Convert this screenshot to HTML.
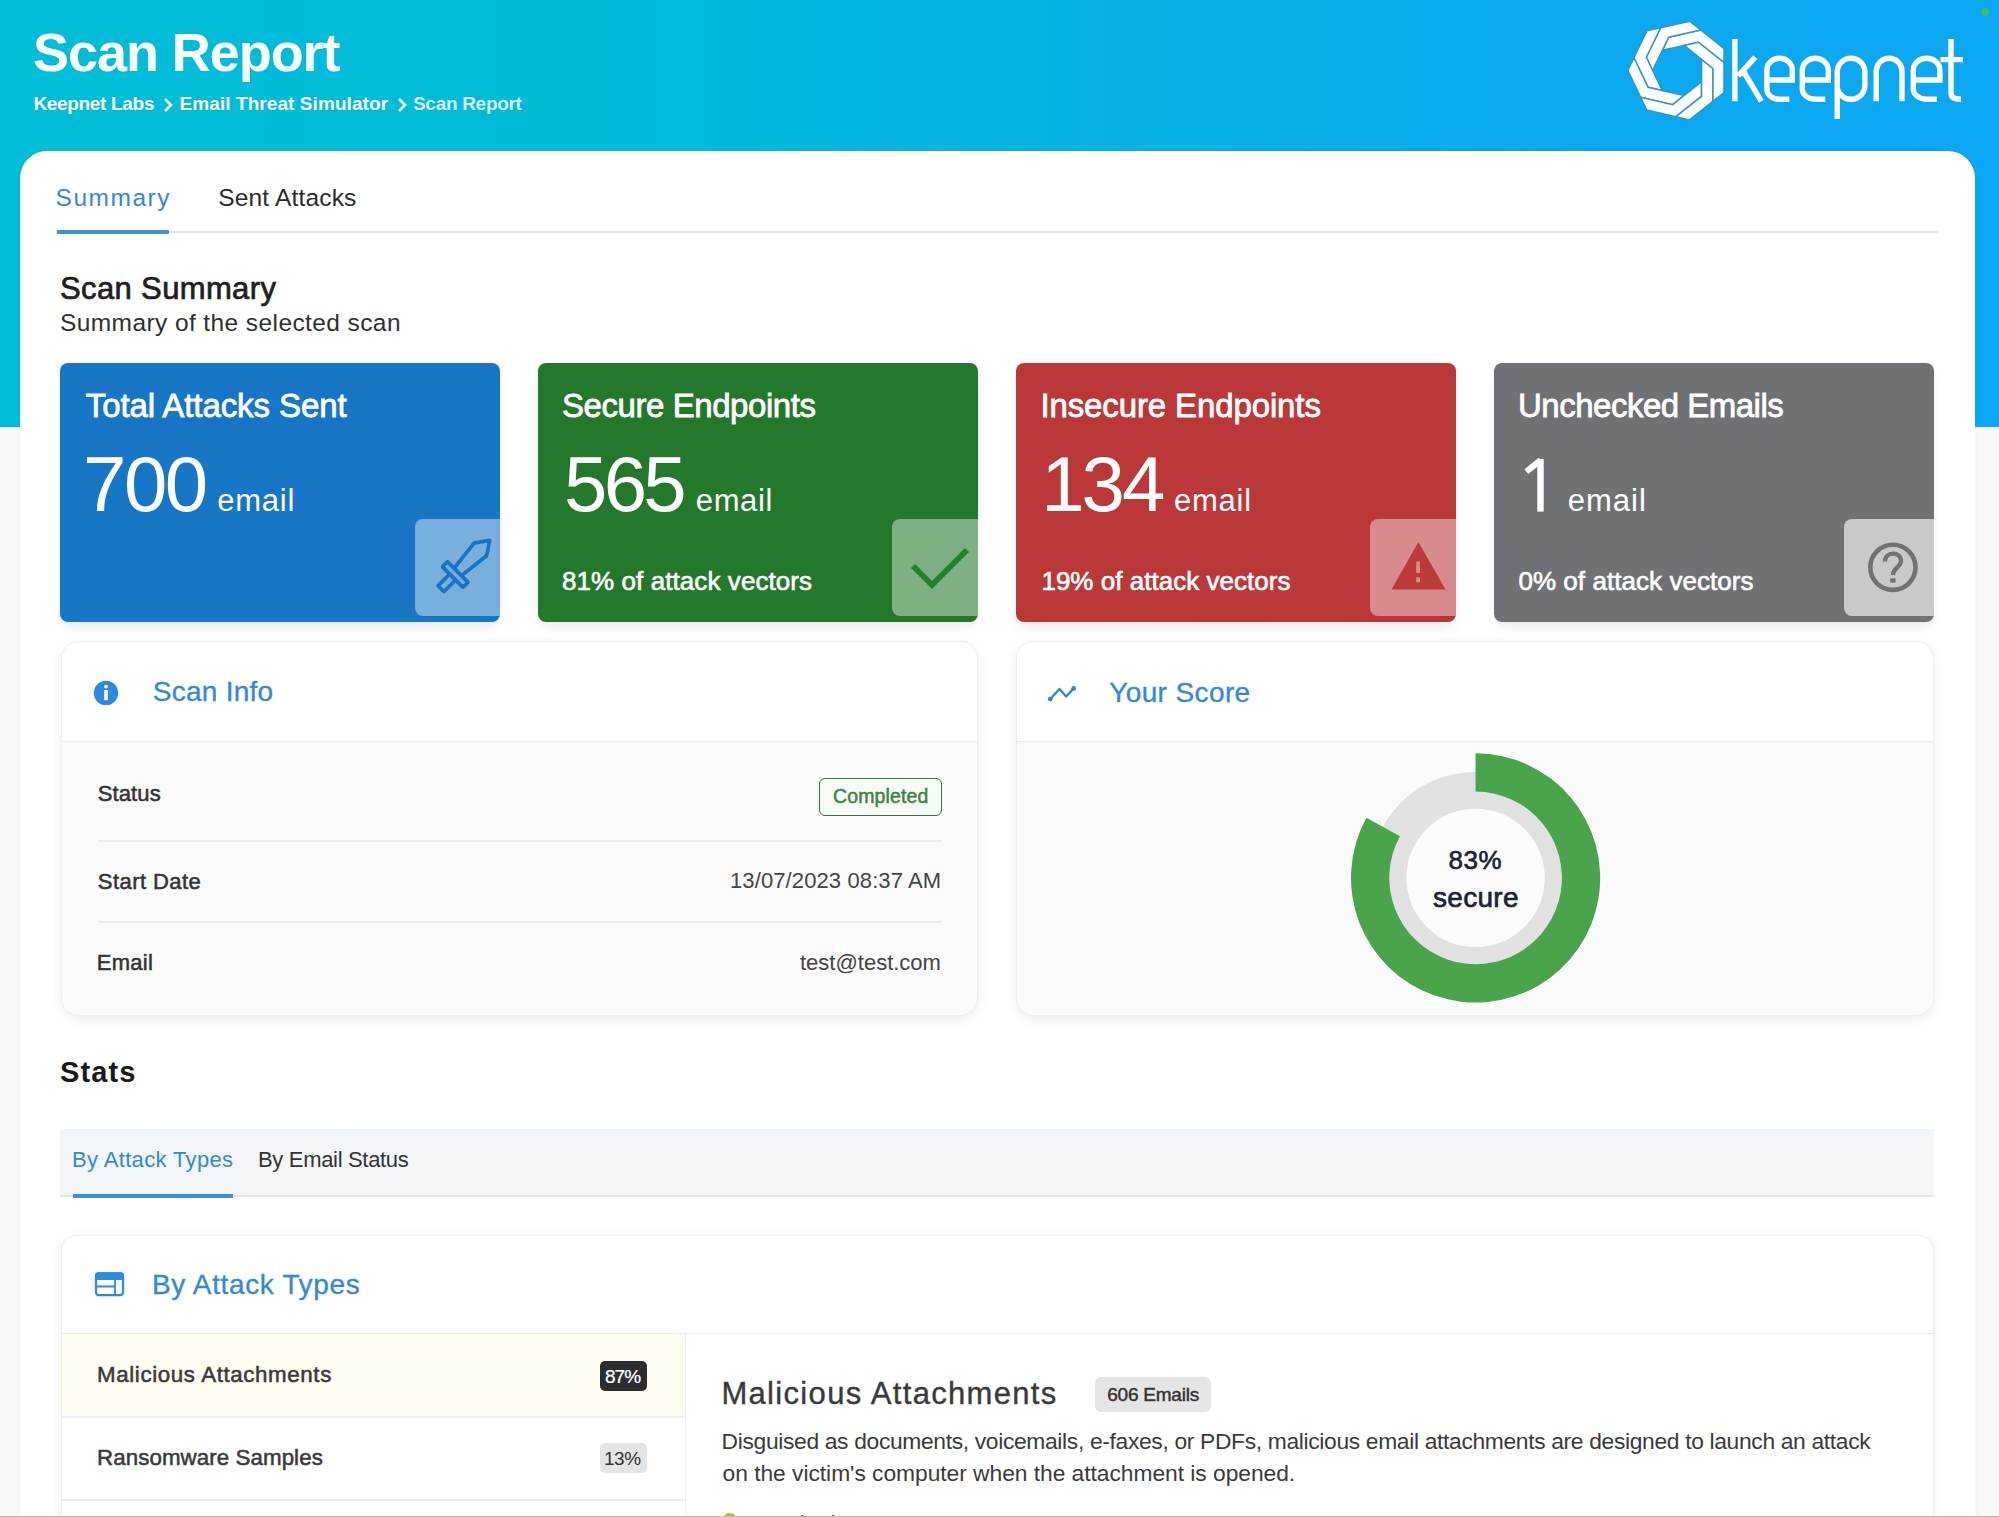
<!DOCTYPE html>
<html><head><meta charset="utf-8"><style>
html,body{margin:0;padding:0;}
body{width:1999px;height:1517px;position:relative;overflow:hidden;background:#f8f8f9;font-family:"Liberation Sans",sans-serif;}
.a{position:absolute;}
.t{position:absolute;white-space:nowrap;line-height:1;}
svg{position:absolute;left:0;top:0;}
</style></head><body>
<div class="a" style="left:0;top:0;width:1999px;height:427px;background:linear-gradient(90deg,#00bdd7 0%,#02bad9 35%,#0aa9ef 80%,#0ca7f2 100%)"></div>
<div class="a" style="left:20px;top:151px;width:1955px;height:1400px;background:#fff;border-radius:27px 27px 0 0;box-shadow:0 0 6px rgba(0,0,0,0.04)"></div>
<!-- tabs -->
<div class="a" style="left:57px;top:231px;width:1881px;height:2px;background:#e4e4e4"></div>
<div class="a" style="left:57px;top:230px;width:112px;height:3.5px;background:#3b8fd3"></div>
<!-- cards -->
<div class="a" style="left:60px;top:363px;width:440px;height:258.8px;background:#1876c6;border-radius:8px;box-shadow:0 7px 12px -3px rgba(0,0,0,0.10);overflow:hidden"><div class="a" style="left:355px;top:155.5px;width:85px;height:97px;background:rgba(255,255,255,0.42);border-radius:8px 0 0 8px"></div></div>
<div class="a" style="left:538px;top:363px;width:440px;height:258.8px;background:#23782b;border-radius:8px;box-shadow:0 7px 12px -3px rgba(0,0,0,0.10);overflow:hidden"><div class="a" style="left:354px;top:155.5px;width:86px;height:97px;background:rgba(255,255,255,0.42);border-radius:8px 0 0 8px"></div></div>
<div class="a" style="left:1016px;top:363px;width:440px;height:258.8px;background:#bb3839;border-radius:8px;box-shadow:0 7px 12px -3px rgba(0,0,0,0.10);overflow:hidden"><div class="a" style="left:354px;top:155.5px;width:86px;height:97px;background:rgba(255,255,255,0.42);border-radius:8px 0 0 8px"></div></div>
<div class="a" style="left:1494px;top:363px;width:440px;height:258.8px;background:#707175;border-radius:8px;box-shadow:0 7px 12px -3px rgba(0,0,0,0.10);overflow:hidden"><div class="a" style="left:350px;top:155.5px;width:90px;height:97px;background:#c9c9cb;border-radius:8px 0 0 8px"></div></div>
<!-- panels -->
<div class="a" style="left:60.5px;top:641px;width:917.5px;height:374.5px;background:#fafafa;border-radius:18px;box-shadow:0 3px 12px rgba(0,0,0,0.08);border:1px solid #eeeeee;box-sizing:border-box;overflow:hidden"><div class="a" style="left:0;top:0;width:100%;height:99px;background:#fff;border-bottom:1px solid #ebebeb"></div></div>
<div class="a" style="left:97.5px;top:840px;width:844px;height:1.5px;background:#eaeaea"></div>
<div class="a" style="left:97.5px;top:921px;width:844px;height:1.5px;background:#eaeaea"></div>
<div class="a" style="left:819px;top:778px;width:122.6px;height:37.6px;border:1.3px solid #3b713e;border-radius:6px;background:#f7fbf6;box-sizing:border-box"></div>
<div class="a" style="left:1016px;top:641px;width:918px;height:374.5px;background:#fafafa;border-radius:18px;box-shadow:0 3px 12px rgba(0,0,0,0.08);border:1px solid #eeeeee;box-sizing:border-box;overflow:hidden"><div class="a" style="left:0;top:0;width:100%;height:99px;background:#fff;border-bottom:1px solid #ebebeb"></div></div>
<!-- stats -->
<div class="a" style="left:60px;top:1128.5px;width:1874px;height:66px;background:#f3f6f9;border-bottom:2.5px solid #e3e6ea"></div>
<div class="a" style="left:73px;top:1194px;width:160px;height:3.5px;background:#3b8fd3"></div>
<div class="a" style="left:60.5px;top:1235px;width:1873px;height:400px;background:#fff;border-radius:15px;box-shadow:0 3px 12px rgba(0,0,0,0.07);border:1px solid #ededed;box-sizing:border-box;overflow:hidden">
  <div class="a" style="left:0;top:97px;width:100%;height:1px;background:#ececec"></div>
  <div class="a" style="left:0;top:98px;width:623px;height:82px;background:#fffcf1"></div>
  <div class="a" style="left:0;top:180px;width:623px;height:1.5px;background:#efefef"></div>
  <div class="a" style="left:0;top:263px;width:623px;height:1.5px;background:#efefef"></div>
  <div class="a" style="left:623px;top:98px;width:1.5px;height:400px;background:#efefef"></div>
</div>
<div class="a" style="left:599.5px;top:1361px;width:47.5px;height:30px;background:#2b2d31;border-radius:5px"></div>
<div class="a" style="left:599.5px;top:1443.3px;width:47.5px;height:30px;background:#e4e4e4;border-radius:5px"></div>
<div class="a" style="left:1094.8px;top:1376.5px;width:116.4px;height:35.2px;background:#e5e5e5;border-radius:6px"></div>
<svg width="1999" height="1517" viewBox="0 0 1999 1517">
<g fill="#fff" stroke="#2f97c2" stroke-width="1.5" stroke-linejoin="miter"><polygon points="1724.05,48.64 1700.75,29.98 1668.75,37.21 1662.39,50.33 1698.41,42.20 1724.02,62.71"/><polygon points="1689.77,21.18 1660.66,27.76 1646.35,57.29 1652.65,70.44 1668.75,37.21 1700.75,29.98"/><polygon points="1646.93,30.86 1633.92,57.72 1648.09,87.32 1662.30,90.60 1646.35,57.29 1660.66,27.76"/><polygon points="1627.79,70.39 1640.68,97.31 1672.65,104.68 1684.07,95.62 1648.09,87.32 1633.92,57.72"/><polygon points="1646.76,110.00 1675.84,116.71 1701.54,96.31 1701.57,81.72 1672.65,104.68 1640.68,97.31"/><polygon points="1689.55,119.87 1712.93,101.31 1713.00,68.50 1701.63,59.38 1701.54,96.31 1675.84,116.71"/><polygon points="1723.95,92.56 1724.02,62.71 1698.41,42.20 1684.19,45.41 1713.00,68.50 1712.93,101.31"/></g>
<path d="M1734.9,39.0 V101.3 M1755.3,57.2 L1738.2,75.8 M1744.2,72.5 L1761.4,101.3 M1766.9,80.0 H1792.3 V69.72999999999995 A12.699999999999932,11.42999999999994 0 0 0 1766.9,69.72999999999995 V89.14000000000004 A12.699999999999932,10.159999999999947 0 0 0 1779.6,99.3 H1789.3 M1802.3,80.0 H1828.3 V70.0 A13.0,11.700000000000001 0 0 0 1802.3,70.0 V88.89999999999999 A13.0,10.4 0 0 0 1815.3,99.3 H1825.3 M1913.3,80.0 H1939.8999999999999 V70.26999999999997 A13.299999999999955,11.96999999999996 0 0 0 1913.3,70.26999999999997 V88.66000000000003 A13.299999999999955,10.639999999999965 0 0 0 1926.6,99.3 H1936.8999999999999 M1837.2,118.9 V72.14999999999992 A13.849999999999909,13.849999999999909 0 0 1 1864.8999999999999,72.14999999999992 V85.45000000000009 A13.849999999999909,13.849999999999909 0 0 1 1837.2,85.45000000000009 M1876.2,101.3 V71.19999999999999 A12.899999999999977,12.899999999999977 0 0 1 1902.0,71.19999999999999 V101.3 M1951.0,39.0 V93 Q1951.0,99.3 1961,99.3 M1940.5,59.6 H1962.8" fill="none" stroke="#fff" stroke-width="5.4"/>
<path d="M165,99 L171,105 L165,111 M399,99 L405,105 L399,111" fill="none" stroke="#fff" stroke-width="2.6"/>
<g transform="translate(455.2,574.5) rotate(45)" fill="none" stroke="#1a72c0" stroke-width="3.7" stroke-linejoin="round"><path d="M-5.2,-3.6 L-8.8,-35.5 L0.3,-48.5 L8.9,-35.5 L5.2,-3.6"/><rect x="-14.6" y="-3.6" width="29.2" height="7.2" rx="1"/><rect x="-4.2" y="3.6" width="8.4" height="16.6" rx="1"/></g>
<rect x="1537.3" y="458.9" width="6.4" height="52.7" fill="#fff"/><path d="M1526.3,471.7 L1540.8,460.1" stroke="#fff" stroke-width="6.2"/>
<path d="M913,566 L932,585 L967,550" fill="none" stroke="#22802b" stroke-width="5.8"/>
<path d="M1418.4,542 L1445.5,589.5 L1391.5,589.5 Z" fill="#bd3a3b"/>
<rect x="1416.2" y="561.5" width="3.8" height="11.5" fill="#d98a8a"/><rect x="1416.2" y="577.3" width="3.8" height="5" fill="#d98a8a"/>
<circle cx="1892.9" cy="567.3" r="22.6" fill="none" stroke="#707175" stroke-width="4.6"/>
<path d="M1885,561.5 C1885,551 1901,551 1901,561 C1901,567 1893,568 1893,575" fill="none" stroke="#707175" stroke-width="4.2"/>
<rect x="1890.2" y="578.3" width="5.3" height="4.4" fill="#707175"/>
<circle cx="106" cy="693" r="12.2" fill="#2b8ae0"/><circle cx="106" cy="686.6" r="1.9" fill="#fff"/><rect x="104.2" y="690" width="3.6" height="10.2" fill="#fff"/>
<path d="M1050.3,699.1 L1059.5,688.9 L1066.1,696.5 L1073.7,688.4" fill="none" stroke="#2f86d0" stroke-width="2.3" stroke-linejoin="round"/><circle cx="1050.3" cy="699.1" r="2.4" fill="#2f86d0"/><circle cx="1073.7" cy="688.4" r="2.4" fill="#2f86d0"/>
<rect x="96" y="1273.4" width="27" height="21.8" rx="3" fill="none" stroke="#2b8ae0" stroke-width="2.3"/><path d="M95,1275.5 Q95,1272.3 98.2,1272.3 H120.9 Q124.1,1272.3 124.1,1275.5 V1280 H95 Z" fill="#2b8ae0"/><path d="M96,1286.5 H115 M115,1279 V1295" stroke="#2b8ae0" stroke-width="1.8"/>
<circle cx="1475.6" cy="877.9" r="87.5" fill="none" stroke="#e1e1e1" stroke-width="37"/>
<circle cx="1475.6" cy="877.9" r="69" fill="#fbfbfb"/>
<path d="M1475.60,753.30 A124.6,124.6 0 1 1 1366.41,817.87 L1399.97,836.32 A86.3,86.3 0 1 0 1475.60,791.60 Z" fill="#49a44c"/>
<circle cx="1985.2" cy="12" r="4.2" fill="#35c46a"/>
<circle cx="729.5" cy="1520" r="7" fill="#e2a52c"/>
</svg>
<div class="t" id="hdr" style="left:33.00px;top:25.10px;font-size:54px;font-weight:700;color:#ffffff;letter-spacing:-1.050px">Scan Report</div>
<div class="t" id="bc1" style="left:33.40px;top:94.35px;font-size:19px;font-weight:700;color:#ffffff;letter-spacing:-0.318px">Keepnet Labs</div>
<div class="t" id="bc2" style="left:179.60px;top:94.35px;font-size:19px;font-weight:700;color:#ffffff;letter-spacing:0.071px">Email Threat Simulator</div>
<div class="t" id="bc3" style="left:413.00px;top:94.35px;font-size:19px;font-weight:700;color:rgba(255,255,255,0.85);letter-spacing:-0.300px">Scan Report</div>
<div class="t" id="tab1" style="left:55.60px;top:186.18px;font-size:24.5px;font-weight:400;color:#3589cf;letter-spacing:1.500px">Summary</div>
<div class="t" id="tab2" style="left:218.20px;top:186.18px;font-size:24.5px;font-weight:400;color:#2b2b2b;letter-spacing:0.182px">Sent Attacks</div>
<div class="t" id="ss" style="left:60.00px;top:272.55px;font-size:31px;font-weight:400;color:#1f1f1f;letter-spacing:0.364px;-webkit-text-stroke:0.74px #1f1f1f">Scan Summary</div>
<div class="t" id="ssub" style="left:60.00px;top:310.78px;font-size:24.5px;font-weight:400;color:#2f2f2f;letter-spacing:0.407px">Summary of the selected scan</div>
<div class="t" id="c1t" style="left:85.80px;top:388.65px;font-size:33px;font-weight:400;color:#ffffff;letter-spacing:-0.088px;-webkit-text-stroke:0.79px #ffffff">Total Attacks Sent</div>
<div class="t" id="c2t" style="left:562.00px;top:388.65px;font-size:33px;font-weight:400;color:#ffffff;letter-spacing:-0.433px;-webkit-text-stroke:0.79px #ffffff">Secure Endpoints</div>
<div class="t" id="c3t" style="left:1040.40px;top:388.65px;font-size:33px;font-weight:400;color:#ffffff;letter-spacing:-0.118px;-webkit-text-stroke:0.79px #ffffff">Insecure Endpoints</div>
<div class="t" id="c4t" style="left:1518.00px;top:388.65px;font-size:33px;font-weight:400;color:#ffffff;letter-spacing:-0.500px;-webkit-text-stroke:0.79px #ffffff">Unchecked Emails</div>
<div class="t" id="c1n" style="left:83.00px;top:445.30px;font-size:78px;font-weight:400;color:#ffffff;letter-spacing:-2.500px">700</div>
<div class="t" id="c2n" style="left:564.00px;top:445.30px;font-size:78px;font-weight:400;color:#ffffff;letter-spacing:-3.750px">565</div>
<div class="t" id="c3n" style="left:1041.20px;top:445.30px;font-size:78px;font-weight:400;color:#ffffff;letter-spacing:-3.000px">134</div>
<div class="t" id="c1e" style="left:217.20px;top:485.25px;font-size:31px;font-weight:400;color:#ffffff;letter-spacing:0.750px">email</div>
<div class="t" id="c2e" style="left:695.80px;top:485.25px;font-size:31px;font-weight:400;color:#ffffff;letter-spacing:0.625px">email</div>
<div class="t" id="c3e" style="left:1174.00px;top:485.25px;font-size:31px;font-weight:400;color:#ffffff;letter-spacing:0.750px">email</div>
<div class="t" id="c4e" style="left:1567.80px;top:485.25px;font-size:31px;font-weight:400;color:#ffffff;letter-spacing:1.000px">email</div>
<div class="t" id="c2p" style="left:562.00px;top:567.70px;font-size:26px;font-weight:400;color:#ffffff;letter-spacing:0.075px;-webkit-text-stroke:0.62px #ffffff">81% of attack vectors</div>
<div class="t" id="c3p" style="left:1041.40px;top:567.70px;font-size:26px;font-weight:400;color:#ffffff;letter-spacing:0.025px;-webkit-text-stroke:0.62px #ffffff">19% of attack vectors</div>
<div class="t" id="c4p" style="left:1518.40px;top:567.70px;font-size:26px;font-weight:400;color:#ffffff;letter-spacing:0.053px;-webkit-text-stroke:0.62px #ffffff">0% of attack vectors</div>
<div class="t" id="si" style="left:152.80px;top:677.50px;font-size:28px;font-weight:400;color:#3589cf;letter-spacing:0.250px;-webkit-text-stroke:0.34px #3589cf">Scan Info</div>
<div class="t" id="ys" style="left:1109.20px;top:679.10px;font-size:28px;font-weight:400;color:#3589cf;letter-spacing:0.389px;-webkit-text-stroke:0.34px #3589cf">Your Score</div>
<div class="t" id="r1" style="left:97.80px;top:782.50px;font-size:22px;font-weight:400;color:#333333;letter-spacing:0.100px;-webkit-text-stroke:0.53px #333333">Status</div>
<div class="t" id="r2" style="left:97.80px;top:870.90px;font-size:22px;font-weight:400;color:#333333;letter-spacing:0.444px;-webkit-text-stroke:0.53px #333333">Start Date</div>
<div class="t" id="r3" style="left:96.80px;top:952.10px;font-size:22px;font-weight:400;color:#333333;letter-spacing:0.250px;-webkit-text-stroke:0.53px #333333">Email</div>
<div class="t" id="comp" style="left:833.00px;top:787.02px;font-size:19.5px;font-weight:400;color:#3f7f42;letter-spacing:0.125px;-webkit-text-stroke:0.47px #3f7f42">Completed</div>
<div class="t" id="date" style="left:730.00px;top:870.30px;font-size:22px;font-weight:400;color:#444444;letter-spacing:0.111px">13/07/2023 08:37 AM</div>
<div class="t" id="mail" style="left:800.00px;top:951.70px;font-size:22px;font-weight:400;color:#444444;letter-spacing:0.000px">test@test.com</div>
<div class="t" id="p83" style="left:1448.60px;top:846.90px;font-size:26px;font-weight:400;color:#1b2236;letter-spacing:0.500px;-webkit-text-stroke:0.62px #1b2236">83%</div>
<div class="t" id="sec" style="left:1433.00px;top:883.50px;font-size:28px;font-weight:400;color:#1b2236;letter-spacing:0.300px;-webkit-text-stroke:0.67px #1b2236">secure</div>
<div class="t" id="stats" style="left:60.00px;top:1057.65px;font-size:29px;font-weight:700;color:#1a1a1a;letter-spacing:1.125px">Stats</div>
<div class="t" id="st1" style="left:72.00px;top:1149.30px;font-size:22px;font-weight:400;color:#3589cf;letter-spacing:0.357px">By Attack Types</div>
<div class="t" id="st2" style="left:258.00px;top:1149.30px;font-size:22px;font-weight:400;color:#333333;letter-spacing:-0.321px">By Email Status</div>
<div class="t" id="bat" style="left:152.00px;top:1271.00px;font-size:28px;font-weight:400;color:#3589cf;letter-spacing:0.643px;-webkit-text-stroke:0.34px #3589cf">By Attack Types</div>
<div class="t" id="row1" style="left:97.00px;top:1364.45px;font-size:22.3px;font-weight:400;color:#3a3a3a;letter-spacing:0.625px;-webkit-text-stroke:0.54px #3a3a3a">Malicious Attachments</div>
<div class="t" id="b87" style="left:605.00px;top:1366.65px;font-size:19px;font-weight:400;color:#ffffff;letter-spacing:-1.000px;-webkit-text-stroke:0.23px #ffffff">87%</div>
<div class="t" id="row2" style="left:97.00px;top:1446.64px;font-size:22.3px;font-weight:400;color:#3a3a3a;letter-spacing:0.088px;-webkit-text-stroke:0.54px #3a3a3a">Ransomware Samples</div>
<div class="t" id="b13" style="left:604.00px;top:1449.05px;font-size:19px;font-weight:400;color:#333333;letter-spacing:-0.500px">13%</div>
<div class="t" id="mat" style="left:721.40px;top:1377.65px;font-size:31px;font-weight:400;color:#3a3a3a;letter-spacing:1.325px;-webkit-text-stroke:0.37px #3a3a3a">Malicious Attachments</div>
<div class="t" id="e606" style="left:1107.20px;top:1384.55px;font-size:19px;font-weight:400;color:#333333;letter-spacing:-0.222px;-webkit-text-stroke:0.46px #333333">606 Emails</div>
<div class="t" id="d1" style="left:721.60px;top:1430.02px;font-size:22.8px;font-weight:400;color:#3a3a3a;letter-spacing:-0.327px">Disguised as documents, voicemails, e-faxes, or PDFs, malicious email attachments are designed to launch an attack</div>
<div class="t" id="d2" style="left:722.60px;top:1461.62px;font-size:22.8px;font-weight:400;color:#3a3a3a;letter-spacing:-0.037px">on the victim's computer when the attachment is opened.</div>
<div class="t" id="att" style="left:748.00px;top:1512.80px;font-size:22px;font-weight:400;color:#3a3a3a;letter-spacing:0.300px">Attacked</div>
<div class="a" style="left:0;top:1516px;width:1999px;height:1px;background:#b9b9b9"></div>
</body></html>
